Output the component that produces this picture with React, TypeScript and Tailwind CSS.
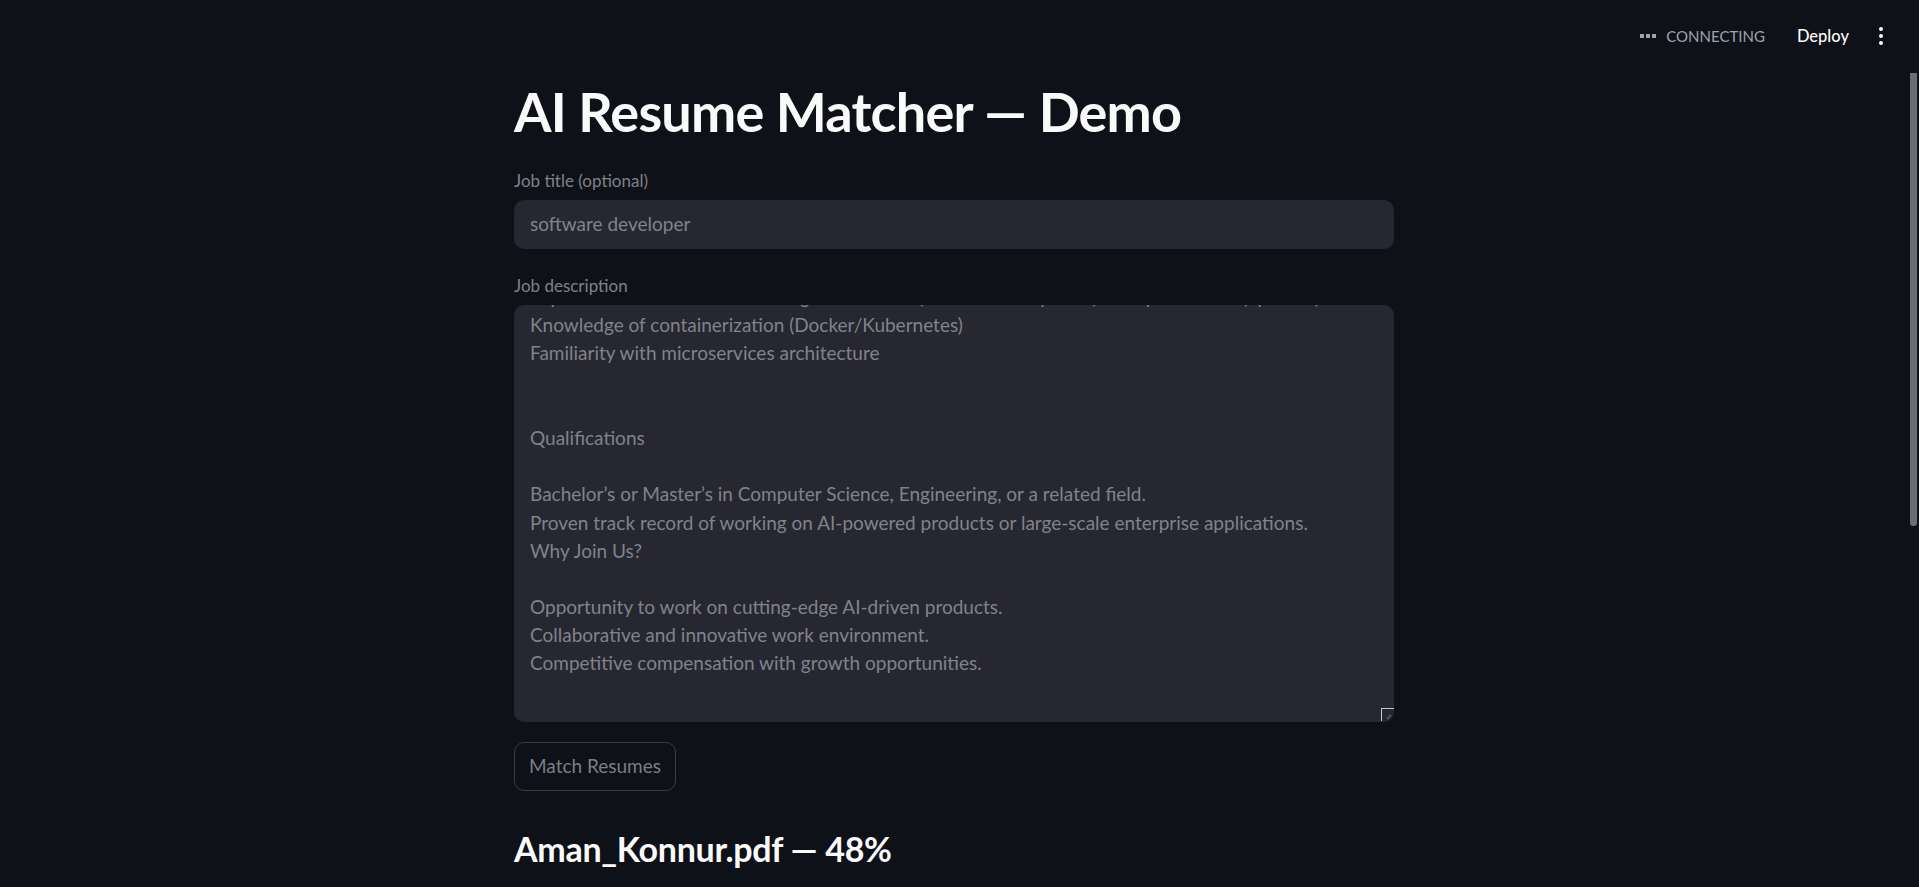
import React from "react";

const lines: string[] = [
  "Experience with machine learning frameworks (TensorFlow/PyTorch) or any LLM APIs (optional)",
  "Knowledge of containerization (Docker/Kubernetes)",
  "Familiarity with microservices architecture",
  "",
  "",
  "Qualifications",
  "",
  "Bachelor’s or Master’s in Computer Science, Engineering, or a related field.",
  "Proven track record of working on AI-powered products or large-scale enterprise applications.",
  "Why Join Us?",
  "",
  "Opportunity to work on cutting-edge AI-driven products.",
  "Collaborative and innovative work environment.",
  "Competitive compensation with growth opportunities.",
];

export default function App() {
  return (
    <div className="relative h-[887px] w-full overflow-hidden bg-[#0e1117] font-['Lato','Noto_Sans',sans-serif]">
      {/* header */}
      <div className="flex h-[72px] items-center justify-end pr-[36px]">
        <div className="flex items-center gap-[10px] text-[#9ea3b0]">
          <div className="flex gap-[2px]">
            <span className="h-[4px] w-[4px] bg-[#9ea3b0]" />
            <span className="h-[4px] w-[4px] bg-[#9ea3b0]" />
            <span className="h-[4px] w-[4px] bg-[#9ea3b0]" />
          </div>
          <span className="text-[15px]">CONNECTING</span>
        </div>
        <span className="ml-[32px] text-[16.5px] font-medium text-[#fafafa]">Deploy</span>
        <div className="ml-[30px] flex flex-col gap-[3px]">
          <span className="h-[4px] w-[4px] rounded-full bg-[#fafafa]" />
          <span className="h-[4px] w-[4px] rounded-full bg-[#fafafa]" />
          <span className="h-[4px] w-[4px] rounded-full bg-[#fafafa]" />
        </div>
      </div>

      {/* main */}
      <div className="ml-[514px] flex w-[880px] flex-col">
        <h1 className="mt-[8px] text-[54px] font-bold leading-[64px] tracking-[-0.8px] text-[#fafafa]">
          AI Resume Matcher — Demo
        </h1>

        <label className="mt-[27px] text-[17px] leading-[20px] text-[#7f828b]">Job title (optional)</label>
        <div className="mt-[9px] flex h-[49px] items-center rounded-[10px] bg-[#262730] px-[16px] text-[19px] text-[#80838b]">
          software developer
        </div>

        <label className="mt-[27px] text-[17px] leading-[20px] text-[#7f828b]">Job description</label>
        <div className="relative mt-[9px] h-[417px] overflow-hidden rounded-[10px] bg-[#262730]">
          <div className="-mt-[22px] px-[16px] text-[19px] leading-[28.2px] text-[#80838b]">
            {lines.map((l, i) => (
              <div key={i} className="h-[28.2px] whitespace-pre">
                {l}
              </div>
            ))}
          </div>
          <div className="absolute bottom-[1px] right-0 h-[13px] w-[13px] border-l border-t border-[#c8c8cc]">
            <svg width="12" height="12" viewBox="0 0 12 12" className="absolute bottom-0 right-0">
              <path d="M5 10 L9 6" stroke="#55565c" strokeWidth="2" />
            </svg>
          </div>
        </div>

        <div className="mt-[20px] flex">
          <button className="flex h-[49px] items-center rounded-[10px] border border-[#3b3c44] px-[14px] text-[19px] text-[#7b7e86]">
            Match Resumes
          </button>
        </div>

        <h3 className="mt-[37px] text-[34px] font-bold leading-[42px] tracking-[-0.3px] text-[#fafafa]">
          Aman_Konnur.pdf — 48%
        </h3>
      </div>

      {/* scrollbar */}
      <div className="absolute right-[2px] top-[73px] h-[453px] w-[7px] rounded-b-[3px] bg-[#6c6d72]" />
    </div>
  );
}
